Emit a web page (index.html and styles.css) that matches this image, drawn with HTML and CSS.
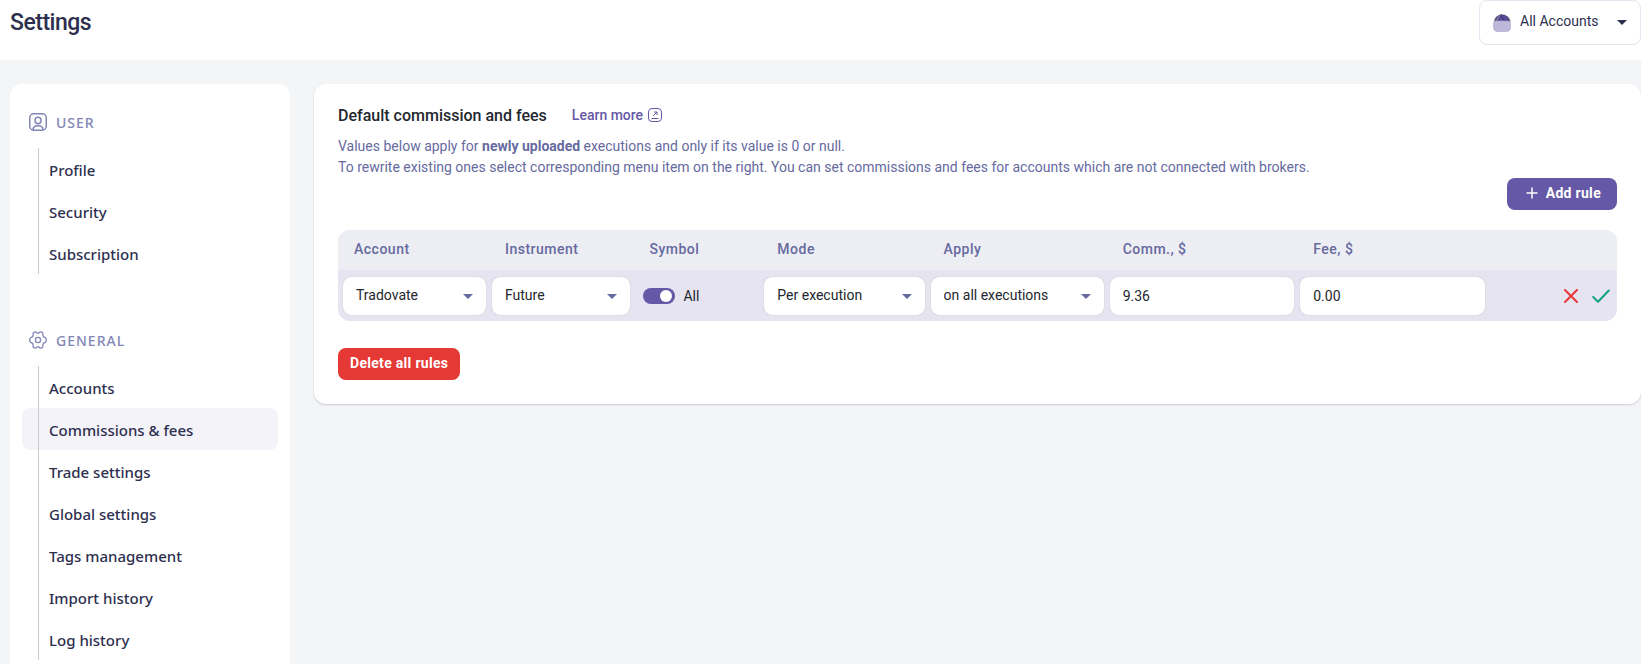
FILE: index.html
```html
<!DOCTYPE html>
<html lang="en">
<head>
<meta charset="utf-8">
<meta name="viewport" content="width=device-width, initial-scale=1">
<title>Settings</title>
<link rel="stylesheet" href="styles.css">
</head>
<body>
<header class="topbar">
  <h1 class="topbar-title">Settings</h1>
  <div class="account-picker">
    <svg class="account-icon" width="18" height="18" viewBox="0 0 18 18" aria-hidden="true">
      <path d="M1 8C1 4.500 3 2 5.500 1.500L5 8Z" fill="#77748f"/>
      <path d="M12 1.500C15.500 2 17.500 5 17.500 8H12Z" fill="#77748f"/>
      <path d="M2.500 7.500C3 3.500 5.500 .7 9 .6L7.500 7.500Z" fill="#8078b3" stroke="#35325c" stroke-width=".8"/>
      <path d="M5.500 7.500C6 3.500 8 1 10.500 1C13 1 15.300 3.800 15.500 7.500Z" fill="#5b4ba0" stroke="#35325c" stroke-width=".8"/>
      <path d="M8.500 2.500L11.500 6.500" stroke="#35325c"/>
      <path d="M.500 9.500Q.500 7 3 7H15Q17.500 7 17.500 9.500V13Q17.500 17.500 13 17.500H5Q.500 17.500 .500 13Z" fill="#bdb7da" stroke="#a9a4c6" stroke-width=".6"/>
    </svg>
    <select class="account-select" aria-label="Account filter"><option>All Accounts</option></select>
    <svg class="caret" width="10" height="5" viewBox="0 0 10 5" aria-hidden="true"><path d="M0 0H10L5 5Z"/></svg>
  </div>
</header>
<div class="layout">
  <nav class="sidebar" aria-label="Settings sections">
    <section class="nav-group">
      <h2 class="nav-heading">
        <svg width="18" height="18" viewBox="0 0 18 18" fill="none" stroke="currentColor" stroke-width="1.500" aria-hidden="true"><rect x=".75" y=".75" width="16.500" height="16.500" rx="4"/><ellipse cx="9" cy="7.500" rx="3" ry="3.200"/><path d="M4 17C4 13.800 6.200 12.800 9 12.800S14 13.800 14 17"/></svg>
        USER
      </h2>
      <ul class="nav-list">
        <li><a class="nav-link" href="#profile">Profile</a></li>
        <li><a class="nav-link" href="#security">Security</a></li>
        <li><a class="nav-link" href="#subscription">Subscription</a></li>
      </ul>
    </section>
    <section class="nav-group">
      <h2 class="nav-heading">
        <svg width="18" height="18" viewBox="0 0 18 18" fill="none" stroke="currentColor" stroke-width="1.300" stroke-linejoin="round" aria-hidden="true"><circle cx="9" cy="9" r="2.600"/><path d="M9 2.300C9.900 2.300 10.300 .9 11.500 .9C13 .9 14 1.900 14 3.200C14 4.300 13.700 4.800 14.300 5.500C14.900 6.200 15.900 5.900 16.600 6.900C17.500 8.200 17.500 9.800 16.600 11.100C15.900 12.100 14.900 11.800 14.300 12.500C13.700 13.200 14 13.700 14 14.800C14 16.100 13 17.100 11.500 17.100C10.300 17.100 9.900 15.700 9 15.700C8.100 15.700 7.700 17.100 6.500 17.100C5 17.100 4 16.100 4 14.800C4 13.700 4.300 13.200 3.700 12.500C3.100 11.800 2.100 12.100 1.400 11.100C.5 9.800 .5 8.200 1.400 6.900C2.100 5.900 3.100 6.200 3.700 5.500C4.300 4.800 4 4.300 4 3.200C4 1.900 5 .9 6.500 .9C7.700 .9 8.100 2.300 9 2.300Z"/></svg>
        GENERAL
      </h2>
      <ul class="nav-list">
        <li><a class="nav-link" href="#accounts">Accounts</a></li>
        <li><a class="nav-link active" href="#commissions" aria-current="page">Commissions &amp; fees</a></li>
        <li><a class="nav-link" href="#trade">Trade settings</a></li>
        <li><a class="nav-link" href="#global">Global settings</a></li>
        <li><a class="nav-link" href="#tags">Tags management</a></li>
        <li><a class="nav-link" href="#import">Import history</a></li>
        <li><a class="nav-link" href="#log">Log history</a></li>
      </ul>
    </section>
  </nav>
  <main class="panel">
    <div class="panel-head">
      <h2 class="panel-title">Default commission and fees</h2>
      <a class="learn-more" href="#learn">Learn more
        <svg width="14" height="14" viewBox="0 0 14 14" fill="none" stroke="currentColor" aria-hidden="true"><rect x=".5" y=".5" width="13" height="13" rx="3.500"/><path d="M5.200 7.800L8.800 4.200M6 4H9V7M3.500 10.500H10.500"/></svg>
      </a>
    </div>
    <p class="panel-text">Values below apply for <b>newly uploaded</b> executions and only if its value is 0 or null.<br>To rewrite existing ones select corresponding menu item on the right. You can set commissions and fees for accounts which are not connected with brokers.</p>
    <div class="panel-actions">
      <button class="btn btn-primary" type="button">
        <svg width="12" height="12" viewBox="0 0 12 12" stroke="currentColor" stroke-width="1.500" aria-hidden="true"><path d="M6 .5V11.500M.5 6H11.500"/></svg>
        Add rule
      </button>
    </div>
    <table class="rules">
      <colgroup>
        <col class="col-account"><col class="col-instrument"><col class="col-symbol"><col class="col-mode"><col class="col-apply"><col class="col-amount"><col class="col-amount"><col class="col-actions">
      </colgroup>
      <thead>
        <tr><th>Account</th><th>Instrument</th><th>Symbol</th><th>Mode</th><th>Apply</th><th>Comm., $</th><th>Fee, $</th><td></td></tr>
      </thead>
      <tbody>
        <tr>
          <td><div class="field"><select class="control" aria-label="Account"><option>Tradovate</option></select><svg class="caret" width="10" height="5" viewBox="0 0 10 5" aria-hidden="true"><path d="M0 0H10L5 5Z"/></svg></div></td>
          <td><div class="field"><select class="control" aria-label="Instrument"><option>Future</option></select><svg class="caret" width="10" height="5" viewBox="0 0 10 5" aria-hidden="true"><path d="M0 0H10L5 5Z"/></svg></div></td>
          <td><label class="switch"><input class="switch-input" type="checkbox" checked>All</label></td>
          <td><div class="field"><select class="control" aria-label="Mode"><option>Per execution</option></select><svg class="caret" width="10" height="5" viewBox="0 0 10 5" aria-hidden="true"><path d="M0 0H10L5 5Z"/></svg></div></td>
          <td><div class="field"><select class="control" aria-label="Apply"><option>on all executions</option></select><svg class="caret" width="10" height="5" viewBox="0 0 10 5" aria-hidden="true"><path d="M0 0H10L5 5Z"/></svg></div></td>
          <td><input class="control" type="text" value="9.36" aria-label="Commission, $"></td>
          <td><input class="control" type="text" value="0.00" aria-label="Fee, $"></td>
          <td>
            <div class="row-actions">
              <button class="icon-btn cancel" type="button" aria-label="Cancel"><svg width="14" height="14" viewBox="0 0 14 14" fill="none" stroke="currentColor" stroke-width="2" stroke-linecap="round"><path d="M1 1L13 13M13 1L1 13"/></svg></button>
              <button class="icon-btn confirm" type="button" aria-label="Save"><svg width="18" height="14" viewBox="0 0 18 14" fill="none" stroke="currentColor" stroke-width="2" stroke-linecap="round" stroke-linejoin="round"><path d="M1.200 8L6 12.800L16.800 1.500"/></svg></button>
            </div>
          </td>
        </tr>
      </tbody>
    </table>
    <button class="btn btn-danger" type="button">Delete all rules</button>
  </main>
</div>
</body>
</html>
```
FILE: styles.css
```css
* { box-sizing: border-box; }

body {
  margin: 0;
  min-height: 100vh;
  display: flex;
  flex-direction: column;
  background: #f4f5f7;
  color: #2d2f4e;
  font-family: Roboto, "Liberation Sans", sans-serif;
  font-size: 14px;
  line-height: 21px;
}

h1, h2, p, ul { margin: 0; padding: 0; }
a { text-decoration: none; }
svg { flex: none; }
button, select, input { font: inherit; color: inherit; }

.topbar {
  display: flex;
  justify-content: space-between;
  align-items: flex-start;
  height: 60px;
  padding-left: 10px;
  background: #fff;
}
.topbar-title {
  padding-top: 9px;
  font-size: 23px;
  font-weight: 500;
  line-height: 28px;
  letter-spacing: -0.5px;
}

.account-picker {
  display: grid;
  align-items: center;
  width: 162px;
  height: 45px;
  border: 1px solid #e6e5f1;
  border-radius: 8px;
}
.account-picker > * { grid-area: 1 / 1; }
.account-icon { margin-left: 13px; pointer-events: none; }
.account-select {
  appearance: none;
  width: 100%;
  height: 100%;
  padding: 0 32px 2px 40px;
  border: 0;
  background: none;
}
.caret {
  justify-self: end;
  margin-right: 13px;
  fill: currentColor;
  pointer-events: none;
}

.layout {
  flex: 1;
  display: flex;
  align-items: flex-start;
  gap: 24px;
  padding: 24px 0 0 10px;
}

.sidebar {
  flex: 0 0 280px;
  align-self: stretch;
  padding: 26px 12px 0;
  border-radius: 12px 12px 0 0;
  background: #fff;
  font-family: "Noto Sans", "Open Sans", sans-serif;
}
.nav-group + .nav-group { margin-top: 54px; }
.nav-heading {
  display: flex;
  align-items: center;
  gap: 9px;
  height: 24px;
  margin: 0 0 14px 7px;
  color: #8386b5;
  font-size: 14px;
  font-weight: 500;
  letter-spacing: 1px;
}
.nav-list {
  position: relative;
  list-style: none;
}
.nav-list::before {
  content: "";
  position: absolute;
  top: 0;
  bottom: 0;
  left: 16px;
  width: 1px;
  background: #c9cacc;
}
.nav-link {
  display: block;
  padding: 12px 27px 9px;
  border-radius: 8px;
  color: #2d2f4e;
  font-size: 15px;
  font-weight: 500;
}
.nav-link.active { background: #f4f3fa; }

.panel {
  flex: 1;
  min-width: 0;
  padding: 20px 24px 24px;
  border-radius: 12px;
  background: #fff;
  box-shadow: 0 1px 2px rgba(40, 42, 60, 0.2);
}
.panel-head {
  display: flex;
  align-items: center;
  gap: 25px;
  height: 24px;
  padding-bottom: 2px;
}
.panel-title {
  color: #24272e;
  font-size: 16px;
  font-weight: 500;
}
.learn-more {
  display: flex;
  align-items: center;
  gap: 5px;
  color: #6558a6;
  font-weight: 500;
}
.panel-text {
  margin-top: 8px;
  color: #666a9f;
}
.panel-actions {
  display: flex;
  justify-content: flex-end;
}

.btn {
  display: inline-flex;
  align-items: center;
  gap: 8px;
  height: 32px;
  padding: 0 12px 2px;
  border: 0;
  border-radius: 8px;
  color: #fff;
  font-weight: 700;
  letter-spacing: 0.3px;
}
.btn-primary {
  padding: 0 16px 2px 19px;
  background: #6558a6;
}
.btn-danger {
  margin-top: 27px;
  background: #e53935;
}

.rules {
  width: 100%;
  margin-top: 20px;
  table-layout: fixed;
  border-spacing: 0;
  border-radius: 12px;
  overflow: hidden;
  background: #e6e4f1;
}
.col-account { width: 11.8%; }
.col-instrument { width: 11.3%; }
.col-symbol { width: 10%; }
.col-mode { width: 13%; }
.col-apply { width: 14%; }
.col-amount { width: 14.9%; }
.col-actions { width: 10.1%; }
.rules thead { background: #edeef4; }
.rules th {
  height: 40px;
  padding: 0 16px 2px;
  color: #666a9f;
  font-weight: 500;
  text-align: left;
  letter-spacing: 0.5px;
}
.rules tbody { color: #24272e; }
.rules tbody td { padding: 7px 3px 6px; }
.rules tbody td:first-child { padding-left: 5px; }

.field {
  display: grid;
  align-items: center;
}
.field > * { grid-area: 1 / 1; }
.field .caret { color: #666a9f; }
.control {
  display: block;
  appearance: none;
  width: 100%;
  height: 38px;
  padding: 0 13px;
  border: 0;
  border-radius: 8px;
  background: #fff;
  box-shadow: 0 0 1px rgba(60, 60, 40, 0.4);
}
select.control { padding-bottom: 2px; }

.switch {
  display: flex;
  align-items: center;
  gap: 8px;
  padding-left: 7px;
}
.switch-input {
  appearance: none;
  display: flex;
  justify-content: flex-end;
  width: 32px;
  height: 16px;
  margin: 0;
  padding: 2px 3px;
  border-radius: 8px;
  background: #6558a6;
}
.switch-input::before {
  content: "";
  width: 12px;
  height: 12px;
  border-radius: 50%;
  background: #fff;
}
.switch-input:not(:checked) {
  justify-content: flex-start;
  background: #b5b3c9;
}

.row-actions {
  display: flex;
  justify-content: flex-end;
  gap: 14px;
  padding-right: 4px;
}
.icon-btn {
  display: flex;
  align-items: center;
  padding: 0;
  border: 0;
  background: none;
}
.cancel { color: #e53935; }
.confirm { color: #10a37f; }
```
